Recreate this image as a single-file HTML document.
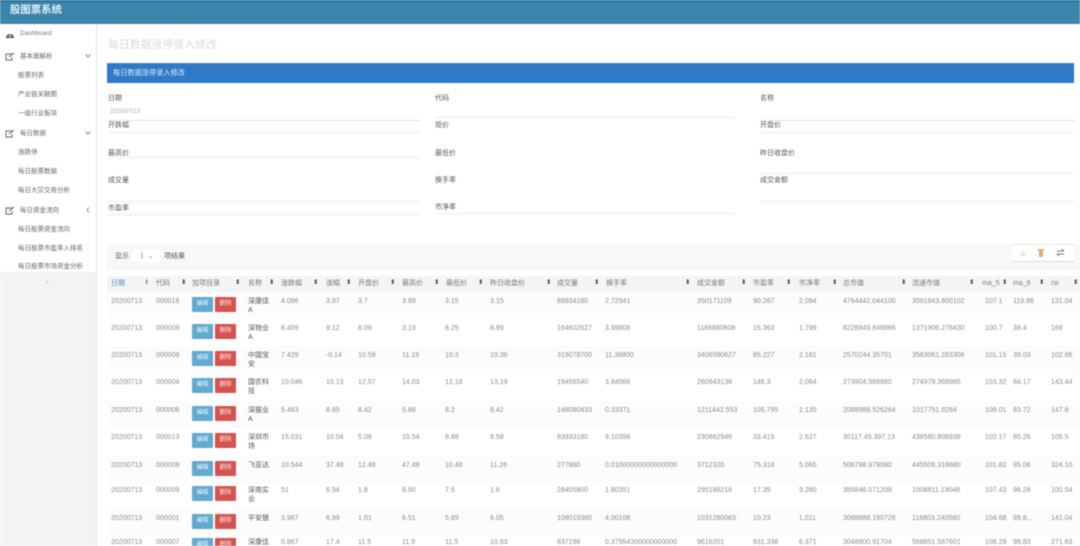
<!DOCTYPE html>
<html lang="zh"><head><meta charset="utf-8"><title>股票系统</title>
<style>
html,body{margin:0;padding:0;width:1080px;height:546px;overflow:hidden;background:#fff}
body{font-family:"Liberation Sans","Noto Sans CJK SC",sans-serif;font-size:7px;color:#666}
#w{position:absolute;left:0;top:0;width:1080px;height:546px;overflow:hidden;filter:blur(.6px)}
.a{position:absolute;white-space:nowrap}
.top{left:0;top:0;width:1080px;height:24px;background:#3b86ad;border-top:2px solid #2f7396;box-sizing:border-box}
.side{left:0;top:24px;width:97px;height:522px;background:#f1f3f4}
.sw{left:0;top:24px;width:96px;height:248px;background:#fff}
.m{font-size:6.5px;color:#666;line-height:10px}
.mh{color:#666}
.lb{font-size:7px;color:#555;line-height:10px;z-index:2}
.ln{height:1px;background:#dfe1e4}
.fl{height:3px;background:#f6f7f9;z-index:1}
.hd{left:107px;top:276px;width:973px;height:16px;background:#f2f4f6}
.h{top:279px;font-size:7px;line-height:9px;color:#777}
.s{top:278px;font-size:6.5px;line-height:10px;color:#444}
.r{position:absolute;left:0;width:1080px;height:27px}
.c{position:absolute;top:5px;white-space:nowrap;font-size:7px;line-height:10px;color:#8a8a8a}
.n{position:absolute;left:248px;top:5px;width:22px;font-size:7px;line-height:9px;color:#555;white-space:normal;word-break:break-all}
.b{position:absolute;left:192px;top:5px;width:21px;height:15px;background:#62a9cf;color:#e8f4fa;text-align:center;font-size:6px;line-height:15px;border-radius:1px}
.d{position:absolute;left:215px;top:5px;width:21px;height:15px;background:#d4534f;color:#fbe9e8;text-align:center;font-size:6px;line-height:15px;border-radius:1px}
.st{position:absolute;left:107px;width:973px;height:27px;background:#fcfcfd}
.x1{left:111px}.x2{left:156px}.x4{left:281px}.x5{left:326px}.x6{left:358px}.x7{left:402px}.x8{left:445px}.x9{left:490px}.x10{left:557px}.x11{left:605px}.x12{left:697px}.x13{left:753px}.x14{left:799px}.x15{left:843px}.x16{left:912px}.x17{left:985px}.x18{left:1013px}.x19{left:1051px}
</style></head><body><div id="w">
<div class="a top"></div>
<div class="a" style="left:10px;top:4px;font-size:10.4px;line-height:14px;color:#e2f1f9;font-weight:bold">股图票系统</div>

<div class="a side"></div><div class="a sw"></div>
<div class="a" style="left:96px;top:24px;width:1px;height:522px;background:#e6e8ea"></div>

<svg class="a" style="left:5px;top:30px" width="10" height="9" viewBox="0 0 10 9"><path d="M1 8 A4 4 0 1 1 9 8 Z" fill="#555"/><circle cx="5" cy="6" r="1" fill="#fff"/></svg>
<div class="a m" style="left:20px;top:29px;font-size:6.5px;color:#777">Dashboard</div>

<svg class="a" style="left:5px;top:52px" width="10" height="9" viewBox="0 0 10 9"><path d="M8 2H1V8H7V5M4 5L9 1" fill="none" stroke="#666" stroke-width="1"/></svg>
<div class="a m mh" style="left:20px;top:52px">基本面解析</div>
<svg class="a" style="left:85px;top:54px" width="6" height="4" viewBox="0 0 6 4"><path d="M0.5 0.5L3 3L5.5 0.5" fill="none" stroke="#888"/></svg>
<div class="a m" style="left:18px;top:71px">股票列表</div>
<div class="a m" style="left:18px;top:90px">产业链关联图</div>
<div class="a m" style="left:18px;top:109px">一级行业板块</div>

<svg class="a" style="left:5px;top:129px" width="10" height="9" viewBox="0 0 10 9"><path d="M8 2H1V8H7V5M4 5L9 1" fill="none" stroke="#666" stroke-width="1"/></svg>
<div class="a m mh" style="left:20px;top:129px">每日数据</div>
<svg class="a" style="left:85px;top:131px" width="6" height="4" viewBox="0 0 6 4"><path d="M0.5 0.5L3 3L5.5 0.5" fill="none" stroke="#888"/></svg>
<div class="a m" style="left:18px;top:148px">涨跌停</div>
<div class="a m" style="left:18px;top:167px">每日股票数据</div>
<div class="a m" style="left:18px;top:186px">每日大宗交易分析</div>

<svg class="a" style="left:5px;top:206px" width="10" height="9" viewBox="0 0 10 9"><path d="M8 2H1V8H7V5M4 5L9 1" fill="none" stroke="#666" stroke-width="1"/></svg>
<div class="a m mh" style="left:20px;top:206px">每日资金流向</div>
<svg class="a" style="left:86px;top:207px" width="4" height="6" viewBox="0 0 4 6"><path d="M3 0.5L1 3L3 5.5" fill="none" stroke="#888"/></svg>
<div class="a m" style="left:18px;top:225px">每日股票资金流向</div>
<div class="a m" style="left:18px;top:244px">每日股票市盈率入排名</div>
<div class="a m" style="left:18px;top:262px">每日股票市场资金分析</div>
<div class="a" style="left:46px;top:279px;color:#aaa;font-size:7px">‹</div>

<div class="a" style="left:108px;top:38px;font-size:10.9px;line-height:14px;color:#d6dcdf">每日数据涨停录入修改</div>
<div class="a" style="left:107px;top:63px;width:967px;height:20px;background:#2f79c9;border-top:1px solid #5f7f9f;box-sizing:border-box"></div>
<div class="a" style="left:113px;top:68px;font-size:7.2px;line-height:10px;color:#d9e9f8">每日数据涨停录入修改</div>

<div class="a lb" style="left:108px;top:94px">日期</div>
<div class="a lb" style="left:110px;top:107px;color:#aaa;font-size:6px">2020/07/13</div>
<div class="a ln" style="left:108px;top:120px;width:312px"></div>
<div class="a lb" style="left:108px;top:121px">开跌幅</div>
<div class="a lb" style="left:108px;top:149px">最高价</div>
<div class="a lb" style="left:108px;top:176px">成交量</div>
<div class="a lb" style="left:108px;top:204px">市盈率</div>
<div class="a fl" style="left:108px;top:131px;width:312px"></div>
<div class="a fl" style="left:108px;top:156px;width:312px"></div>
<div class="a fl" style="left:108px;top:200px;width:312px"></div>
<div class="a fl" style="left:108px;top:213px;width:312px"></div>

<div class="a lb" style="left:435px;top:94px">代码</div>
<div class="a lb" style="left:435px;top:121px">现价</div>
<div class="a lb" style="left:435px;top:149px">最低价</div>
<div class="a lb" style="left:435px;top:176px">换手率</div>
<div class="a lb" style="left:435px;top:203px">市净率</div>
<div class="a fl" style="left:435px;top:116px;width:300px"></div>
<div class="a fl" style="left:435px;top:212px;width:300px"></div>

<div class="a lb" style="left:760px;top:94px">名称</div>
<div class="a ln" style="left:760px;top:120px;width:314px"></div>
<div class="a lb" style="left:760px;top:121px">开盘价</div>
<div class="a lb" style="left:760px;top:149px">昨日收盘价</div>
<div class="a lb" style="left:760px;top:176px">成交金额</div>
<div class="a fl" style="left:760px;top:131px;width:314px"></div>
<div class="a fl" style="left:760px;top:172px;width:314px"></div>
<div class="a fl" style="left:760px;top:200px;width:314px"></div>

<div class="a" style="left:107px;top:244px;width:973px;height:26px;background:#f7f8f9"></div>
<div class="a lb" style="left:115px;top:252px">显示</div>
<div class="a" style="left:133px;top:250px;width:27px;height:12px;background:#fff"></div>
<div class="a lb" style="left:140px;top:252px;color:#888">1 &nbsp;⌄</div>
<div class="a lb" style="left:164px;top:252px">项结果</div>
<div class="a" style="left:1012px;top:244px;width:62px;height:18px;background:#fff;border-top:1px solid #e4e6e6;border-bottom:1px solid #d8dadc;box-sizing:border-box"></div>
<svg class="a" style="left:1018px;top:248px" width="50" height="10" viewBox="0 0 50 10"><path d="M2 8L5 2L8 8Z" fill="#e6e6e6"/><path d="M19 1H27L25 3V9H21V3Z" fill="#d8b070"/><path d="M39 3H46M46 3L44 1M39 6H46M39 6L41 8" stroke="#777" fill="none"/></svg>

<div class="a hd"></div>
<div class="a h" style="left:111px;color:#4f8fb5">日期</div><div class="a s" style="left:144px;color:#999">⬍</div>
<div class="a h" style="left:156px">代码</div><div class="a s" style="left:181px">⬍</div>
<div class="a h" style="left:192px">加项目录</div><div class="a s" style="left:235px">⬍</div>
<div class="a h" style="left:248px">名称</div><div class="a s" style="left:269px">⬍</div>
<div class="a h" style="left:281px">涨跌幅</div><div class="a s" style="left:313px">⬍</div>
<div class="a h" style="left:326px">涨幅</div><div class="a s" style="left:346px">⬍</div>
<div class="a h" style="left:358px">开盘价</div><div class="a s" style="left:390px">⬍</div>
<div class="a h" style="left:402px">最高价</div><div class="a s" style="left:434px">⬍</div>
<div class="a h" style="left:446px">最低价</div><div class="a s" style="left:478px">⬍</div>
<div class="a h" style="left:490px">昨日收盘价</div><div class="a s" style="left:546px">⬍</div>
<div class="a h" style="left:557px">成交量</div><div class="a s" style="left:594px">⬍</div>
<div class="a h" style="left:606px">换手率</div><div class="a s" style="left:685px">⬍</div>
<div class="a h" style="left:697px">成交金额</div><div class="a s" style="left:741px">⬍</div>
<div class="a h" style="left:753px">市盈率</div><div class="a s" style="left:786px">⬍</div>
<div class="a h" style="left:799px">市净率</div><div class="a s" style="left:832px">⬍</div>
<div class="a h" style="left:843px">总市值</div><div class="a s" style="left:901px">⬍</div>
<div class="a h" style="left:912px">流通市值</div><div class="a s" style="left:969px">⬍</div>
<div class="a h" style="left:982px">ma_5</div><div class="a s" style="left:1002px">⬍</div>
<div class="a h" style="left:1013px">ma_6</div><div class="a s" style="left:1039px">⬍</div>
<div class="a h" style="left:1051px">rsi</div><div class="a s" style="left:1073px">⬍</div>

<div class="a" style="top:292px;left:0;width:1080px;height:254px">
<div class="st" style="top:0"></div><div class="st" style="top:55px"></div><div class="st" style="top:109px"></div><div class="st" style="top:164px"></div><div class="st" style="top:217px"></div>
<div class="r" style="top:0"><span class="c x1">20200713</span><span class="c x2">000016</span><span class="b">编辑</span><span class="d">删除</span><span class="n">深康佳A</span><span class="c x4">4.086</span><span class="c x5">3.97</span><span class="c x6">3.7</span><span class="c x7">3.99</span><span class="c x8">3.15</span><span class="c x9">3.15</span><span class="c x10">89934180</span><span class="c x11">2.72941</span><span class="c x12">350171109</span><span class="c x13">90.267</span><span class="c x14">2.094</span><span class="c x15">4764442.044100</span><span class="c x16">3591843.800102</span><span class="c x17">107.1</span><span class="c x18">119.86</span><span class="c x19">131.04</span></div>
<div class="r" style="top:27px"><span class="c x1">20200713</span><span class="c x2">000009</span><span class="b">编辑</span><span class="d">删除</span><span class="n">深物业A</span><span class="c x4">8.459</span><span class="c x5">9.12</span><span class="c x6">8.09</span><span class="c x7">3.19</span><span class="c x8">8.25</span><span class="c x9">8.89</span><span class="c x10">164602627</span><span class="c x11">3.99808</span><span class="c x12">1166880608</span><span class="c x13">15.363</span><span class="c x14">1.799</span><span class="c x15">8228849.849866</span><span class="c x16">1371906.278430</span><span class="c x17">100.7</span><span class="c x18">38.4</span><span class="c x19">168</span></div>
<div class="r" style="top:54px"><span class="c x1">20200713</span><span class="c x2">000008</span><span class="b">编辑</span><span class="d">删除</span><span class="n">中国宝安</span><span class="c x4">7.429</span><span class="c x5">-0.14</span><span class="c x6">10.59</span><span class="c x7">11.19</span><span class="c x8">10.3</span><span class="c x9">10.36</span><span class="c x10">319078700</span><span class="c x11">11.36800</span><span class="c x12">3406590627</span><span class="c x13">85.227</span><span class="c x14">2.181</span><span class="c x15">2570244.35701</span><span class="c x16">3583061.283306</span><span class="c x17">101.15</span><span class="c x18">39.03</span><span class="c x19">102.86</span></div>
<div class="r" style="top:81px"><span class="c x1">20200713</span><span class="c x2">000004</span><span class="b">编辑</span><span class="d">删除</span><span class="n">国农科技</span><span class="c x4">10.046</span><span class="c x5">10.13</span><span class="c x6">12.57</span><span class="c x7">14.03</span><span class="c x8">12.18</span><span class="c x9">13.19</span><span class="c x10">19456540</span><span class="c x11">3.84566</span><span class="c x12">260943136</span><span class="c x13">146.3</span><span class="c x14">2.064</span><span class="c x15">273904.568980</span><span class="c x16">274979.368985</span><span class="c x17">103.32</span><span class="c x18">84.17</span><span class="c x19">143.44</span></div>
<div class="r" style="top:109px"><span class="c x1">20200713</span><span class="c x2">000006</span><span class="b">编辑</span><span class="d">删除</span><span class="n">深振业A</span><span class="c x4">5.463</span><span class="c x5">8.85</span><span class="c x6">8.42</span><span class="c x7">5.88</span><span class="c x8">8.2</span><span class="c x9">8.42</span><span class="c x10">148080433</span><span class="c x11">0.33371</span><span class="c x12">1211442.553</span><span class="c x13">105.795</span><span class="c x14">2.135</span><span class="c x15">2088988.526264</span><span class="c x16">1017751.9284</span><span class="c x17">108.01</span><span class="c x18">83.72</span><span class="c x19">147.8</span></div>
<div class="r" style="top:136px"><span class="c x1">20200713</span><span class="c x2">000013</span><span class="b">编辑</span><span class="d">删除</span><span class="n">深圳市场</span><span class="c x4">15.031</span><span class="c x5">10.04</span><span class="c x6">5.08</span><span class="c x7">10.54</span><span class="c x8">8.88</span><span class="c x9">9.58</span><span class="c x10">83933180</span><span class="c x11">9.10358</span><span class="c x12">230862946</span><span class="c x13">33.419</span><span class="c x14">2.627</span><span class="c x15">30117.45 397.13</span><span class="c x16">438580.806938</span><span class="c x17">102.17</span><span class="c x18">85.26</span><span class="c x19">105.5</span></div>
<div class="r" style="top:164px"><span class="c x1">20200713</span><span class="c x2">000008</span><span class="b">编辑</span><span class="d">删除</span><span class="n" style="white-space:nowrap">飞亚达</span><span class="c x4">10.544</span><span class="c x5">37.48</span><span class="c x6">12.48</span><span class="c x7">47.48</span><span class="c x8">10.48</span><span class="c x9">11.26</span><span class="c x10">277880</span><span class="c x11">0.01000000000000000</span><span class="c x12">3712320</span><span class="c x13">75.318</span><span class="c x14">5.065</span><span class="c x15">508798.979080</span><span class="c x16">445506.318680</span><span class="c x17">101.82</span><span class="c x18">95.06</span><span class="c x19">324.10</span></div>
<div class="r" style="top:189px"><span class="c x1">20200713</span><span class="c x2">000009</span><span class="b">编辑</span><span class="d">删除</span><span class="n">深南实业</span><span class="c x4">51</span><span class="c x5">6.94</span><span class="c x6">1.8</span><span class="c x7">8.50</span><span class="c x8">7.5</span><span class="c x9">1.6</span><span class="c x10">28405800</span><span class="c x11">1.80351</span><span class="c x12">295188216</span><span class="c x13">17.35</span><span class="c x14">3.280</span><span class="c x15">355846.071209</span><span class="c x16">1008811.19048</span><span class="c x17">107.43</span><span class="c x18">98.28</span><span class="c x19">100.54</span></div>
<div class="r" style="top:217px"><span class="c x1">20200713</span><span class="c x2">000001</span><span class="b">编辑</span><span class="d">删除</span><span class="n" style="white-space:nowrap">平安银</span><span class="c x4">3.987</span><span class="c x5">6.99</span><span class="c x6">1.01</span><span class="c x7">6.51</span><span class="c x8">5.89</span><span class="c x9">6.05</span><span class="c x10">108019380</span><span class="c x11">4.00108</span><span class="c x12">1031280083</span><span class="c x13">10.23</span><span class="c x14">1.011</span><span class="c x15">3088888.180728</span><span class="c x16">116803.240580</span><span class="c x17">104.68</span><span class="c x18">99.8...</span><span class="c x19">141.04</span></div>
<div class="r" style="top:241px"><span class="c x1">20200713</span><span class="c x2">000007</span><span class="b">编辑</span><span class="d">删除</span><span class="n" style="white-space:nowrap">深康佳</span><span class="c x4">0.867</span><span class="c x5">17.4</span><span class="c x6">11.5</span><span class="c x7">11.9</span><span class="c x8">11.5</span><span class="c x9">10.93</span><span class="c x10">837298</span><span class="c x11">0.37954300000000000</span><span class="c x12">9616201</span><span class="c x13">831.338</span><span class="c x14">6.371</span><span class="c x15">3048800.91704</span><span class="c x16">568851.587601</span><span class="c x17">108.29</span><span class="c x18">98.83</span><span class="c x19">271.63</span></div>
</div>
</div></body></html>
